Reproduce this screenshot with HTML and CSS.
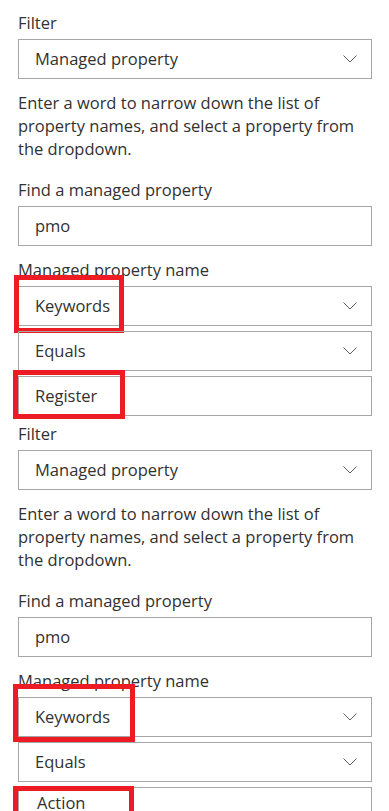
FILE: index.html
```html
<!DOCTYPE html>
<html lang="en">
<head>
  <meta charset="UTF-8">
  <title>Property filter</title>
  <link rel="stylesheet" href="styles.css">
</head>
<body>

  <div class="panel">

    <!-- premier filtre -->
    <section class="filter">
      <div class="field-label">Filter</div>
      <div class="field dropdown">
        <span>Managed property</span>
        <svg class="chevron" width="14" height="8" viewBox="0 0 14 8"><polyline points="0.5,0.5 7,7 13.5,0.5"/></svg>
      </div>
      <p class="hint">Enter a word to narrow down the list of property names, and select a property from the dropdown.</p>
      <div class="field-label find-label">Find a managed property</div>
      <div class="field textbox">pmo</div>
      <div class="field-label name-label">Managed property name</div>
      <div class="stack">
        <div class="field dropdown">
          <span>Keywords</span>
          <svg class="chevron" width="14" height="8" viewBox="0 0 14 8"><polyline points="0.5,0.5 7,7 13.5,0.5"/></svg>
          <div class="mark mark-name1"></div>
        </div>
        <div class="field dropdown">
          <span>Equals</span>
          <svg class="chevron" width="14" height="8" viewBox="0 0 14 8"><polyline points="0.5,0.5 7,7 13.5,0.5"/></svg>
        </div>
        <div class="field textbox">
          Register
          <div class="mark mark-value1"></div>
        </div>
      </div>
    </section>

    <!-- deuxieme filtre -->
    <section class="filter">
      <div class="field-label">Filter</div>
      <div class="field dropdown">
        <span>Managed property</span>
        <svg class="chevron" width="14" height="8" viewBox="0 0 14 8"><polyline points="0.5,0.5 7,7 13.5,0.5"/></svg>
      </div>
      <p class="hint">Enter a word to narrow down the list of property names, and select a property from the dropdown.</p>
      <div class="field-label find-label">Find a managed property</div>
      <div class="field textbox">pmo</div>
      <div class="field-label name-label">Managed property name</div>
      <div class="stack">
        <div class="field dropdown">
          <span>Keywords</span>
          <svg class="chevron" width="14" height="8" viewBox="0 0 14 8"><polyline points="0.5,0.5 7,7 13.5,0.5"/></svg>
          <div class="mark mark-name2"></div>
        </div>
        <div class="field dropdown">
          <span>Equals</span>
          <svg class="chevron" width="14" height="8" viewBox="0 0 14 8"><polyline points="0.5,0.5 7,7 13.5,0.5"/></svg>
        </div>
        <div class="field textbox action">
          Action
          <div class="mark mark-value2"></div>
        </div>
      </div>
    </section>

  </div>

</body>
</html>
```

FILE: styles.css
```css
body {
  margin: 0;
  background-color: #ffffff;
  color: #323130;
  font-family: "Open Sans", "Noto Sans", sans-serif;
  font-size: 16.5px;
}

.panel {
  padding: 11px 17px 0 18px;
}

.filter + .filter {
  margin-top: 6px;
}

.field-label {
  line-height: 24px;
  height: 24px;
  margin-bottom: 4px;
}

.find-label {
  margin-top: 18px;
}

.name-label {
  margin-top: 12px;
}

.field {
  position: relative;
  box-sizing: border-box;
  height: 40px;
  border: 1px solid #a6a6a6;
  padding: 0 14px 0 16px;
  display: flex;
  align-items: center;
  justify-content: space-between;
  line-height: 20px;
}

.chevron {
  fill: none;
  stroke: #605e5c;
  stroke-width: 1;
}

.hint {
  margin: 12px 0 0 0;
  line-height: 23px;
}

.stack {
  display: flex;
  flex-direction: column;
  gap: 5px;
}

.action {
  padding-left: 18px;
  padding-top: 5px;
  align-items: flex-start;
}

.mark {
  position: absolute;
  box-sizing: border-box;
  border: 5px solid #ed1c24;
}

.mark-name1 {
  left: -5px;
  top: -12px;
  width: 110px;
  height: 58px;
}

.mark-value1 {
  left: -6px;
  top: -7px;
  width: 112px;
  height: 49px;
}

.mark-name2 {
  left: -6px;
  top: -14px;
  width: 122px;
  height: 58px;
}

.mark-value2 {
  left: -6px;
  top: -2px;
  width: 121px;
  height: 30px;
}
```
